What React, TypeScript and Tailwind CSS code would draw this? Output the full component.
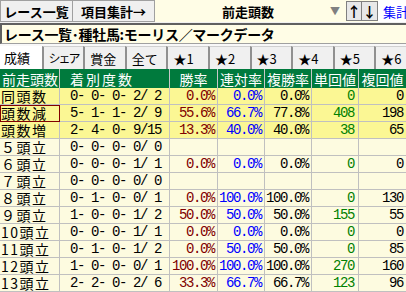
const JP = "font-['MS_Gothic','Noto_Sans_CJK_JP',sans-serif]";
const NUM = "font-['Liberation_Mono',monospace] text-[14px] leading-none tracking-[-1.4px] whitespace-pre";

const TABS = ["成績", "シェア", "賞金", "全て", "★1", "★2", "★3", "★4", "★5", "★6"];

type Row = {
  label: string;
  counts: string;
  win?: string;
  place2?: string;
  place3?: string;
  tan?: string;
  fuku?: string;
  hot?: boolean;
  selected?: boolean;
};

const ROWS: Row[] = [
  { label: "同頭数", counts: "0- 0- 0- 2/ 2", win: "0.0%", place2: "0.0%", place3: "0.0%", tan: "0", fuku: "0", hot: true },
  { label: "頭数減", counts: "5- 1- 1- 2/ 9", win: "55.6%", place2: "66.7%", place3: "77.8%", tan: "408", fuku: "198", hot: true, selected: true },
  { label: "頭数増", counts: "2- 4- 0- 9/15", win: "13.3%", place2: "40.0%", place3: "40.0%", tan: "38", fuku: "65", hot: true },
  { label: "５頭立", counts: "0- 0- 0- 0/ 0" },
  { label: "６頭立", counts: "0- 0- 0- 1/ 1", win: "0.0%", place2: "0.0%", place3: "0.0%", tan: "0", fuku: "0" },
  { label: "７頭立", counts: "0- 0- 0- 0/ 0" },
  { label: "８頭立", counts: "0- 1- 0- 0/ 1", win: "0.0%", place2: "100.0%", place3: "100.0%", tan: "0", fuku: "130" },
  { label: "９頭立", counts: "1- 0- 0- 1/ 2", win: "50.0%", place2: "50.0%", place3: "50.0%", tan: "155", fuku: "55" },
  { label: "10頭立", counts: "0- 0- 0- 1/ 1", win: "0.0%", place2: "0.0%", place3: "0.0%", tan: "0", fuku: "0" },
  { label: "11頭立", counts: "0- 1- 0- 1/ 2", win: "0.0%", place2: "50.0%", place3: "50.0%", tan: "0", fuku: "85" },
  { label: "12頭立", counts: "1- 0- 0- 0/ 1", win: "100.0%", place2: "100.0%", place3: "100.0%", tan: "270", fuku: "160" },
  { label: "13頭立", counts: "2- 2- 0- 2/ 6", win: "33.3%", place2: "66.7%", place3: "66.7%", tan: "123", fuku: "96" },
];

const COLS = "grid grid-cols-[60px_110px_48px_47px_47px_47px_47px]";

export default function App() {
  return (
    <div className={`w-[406px] h-[292px] overflow-hidden bg-[#f0f0f0] text-black leading-none ${JP}`}>
      {/* top toolbar */}
      <div className="h-[22px] flex items-stretch bg-[#fffde6]">
        <div className="w-[73px] flex items-center justify-center bg-[#f0f0f0] border border-[#a0a0a0] text-[13px] font-bold whitespace-nowrap">
          レース一覧
        </div>
        <div className="w-[82px] flex items-center justify-center bg-[#f0f0f0] border-y border-r border-[#a0a0a0] text-[13px] font-bold whitespace-nowrap">
          項目集計→
        </div>
        <div className="flex-1 flex items-center">
          <span className="ml-[67px] text-[13px] font-bold whitespace-nowrap">前走頭数</span>
          <span className="ml-auto mr-[6px] text-[10px] text-[#808080]">▼</span>
        </div>
        <div className="w-[16px] my-[1px] flex items-center justify-center bg-[#e8e8e8] border border-[#808080] text-[14px] font-bold">↑</div>
        <div className="w-[16px] my-[1px] flex items-center justify-center bg-[#e8e8e8] border-y border-r border-[#808080] text-[14px] font-bold">↓</div>
        <div className="w-[28px] pl-[5px] flex items-center bg-white text-[13px] text-[#0000ff] whitespace-nowrap overflow-hidden">集計</div>
      </div>

      {/* title */}
      <div className="mt-[1px] h-[21px] flex items-center bg-[#fffde6] border-t-2 border-l-2 border-[#606060] border-b border-b-[#a0a0a0] pl-[2px] text-[14px] font-bold tracking-[-0.3px] whitespace-nowrap">
        レース一覧･種牡馬:モーリス／マークデータ
      </div>

      {/* tabs */}
      <div className="h-[25px] flex items-end bg-[#f8f8f8] pt-[2px]">
        {TABS.map((t, i) => (
          <div
            key={t}
            className={`shrink-0 w-[41.6px] h-full flex items-center whitespace-nowrap ${
              i === 1 ? "text-[12px] tracking-[-2px]" : "text-[13px]"
            } ${
              i === 0
                ? "bg-white pl-[4px]"
                : "bg-[#f0f0f0] border-l-2 border-l-[#909090] border-t border-t-[#d0d0d0] pl-[5px]"
            }`}
          >
            {t}
          </div>
        ))}
      </div>

      {/* header */}
      <div className={`${COLS} h-[19px] bg-[#007a3d] text-white text-[14px] whitespace-nowrap`}>
        <div className="pl-[2px] flex items-center border-r border-[#c8c8c8]">前走頭数</div>
        <div className="pl-[10px] flex items-center border-r border-[#c8c8c8] tracking-[2px]">着別度数</div>
        <div className="flex items-center justify-center border-r border-[#c8c8c8]">勝率</div>
        <div className="flex items-center justify-center border-r border-[#c8c8c8]">連対率</div>
        <div className="flex items-center justify-center border-r border-[#c8c8c8]">複勝率</div>
        <div className="flex items-center justify-center border-r border-[#c8c8c8]">単回値</div>
        <div className="flex items-center justify-center">複回値</div>
      </div>

      {/* rows */}
      {ROWS.map(r => (
        <div
          key={r.label}
          className={`${COLS} h-[17px] ${r.hot ? "bg-[#fbf794]" : "bg-[#fdfbe0]"}`}
        >
          <div
            className={`pl-[1px] flex items-center text-[14px] tracking-[1.5px] whitespace-nowrap border-r border-b border-[#c0c0c0] ${
              r.selected ? "outline outline-1 outline-[#800000] -outline-offset-1" : ""
            }`}
          >
            {r.label}
          </div>
          <div className={`pl-[10px] flex items-center border-r border-b border-[#c0c0c0] ${NUM}`}>{r.counts}</div>
          <div className={`pr-[3px] flex items-center justify-end border-r border-b border-[#c0c0c0] text-[#800000] ${NUM}`}>{r.win}</div>
          <div className={`pr-[3px] flex items-center justify-end border-r border-b border-[#c0c0c0] text-[#0000ff] ${NUM}`}>{r.place2}</div>
          <div className={`pr-[3px] flex items-center justify-end border-r border-b border-[#c0c0c0] ${NUM}`}>{r.place3}</div>
          <div className={`pr-[4px] flex items-center justify-end border-r border-b border-[#c0c0c0] text-[#008000] ${NUM}`}>{r.tan}</div>
          <div className={`pr-[3px] flex items-center justify-end border-b border-[#c0c0c0] ${NUM}`}>{r.fuku}</div>
        </div>
      ))}
    </div>
  );
}
